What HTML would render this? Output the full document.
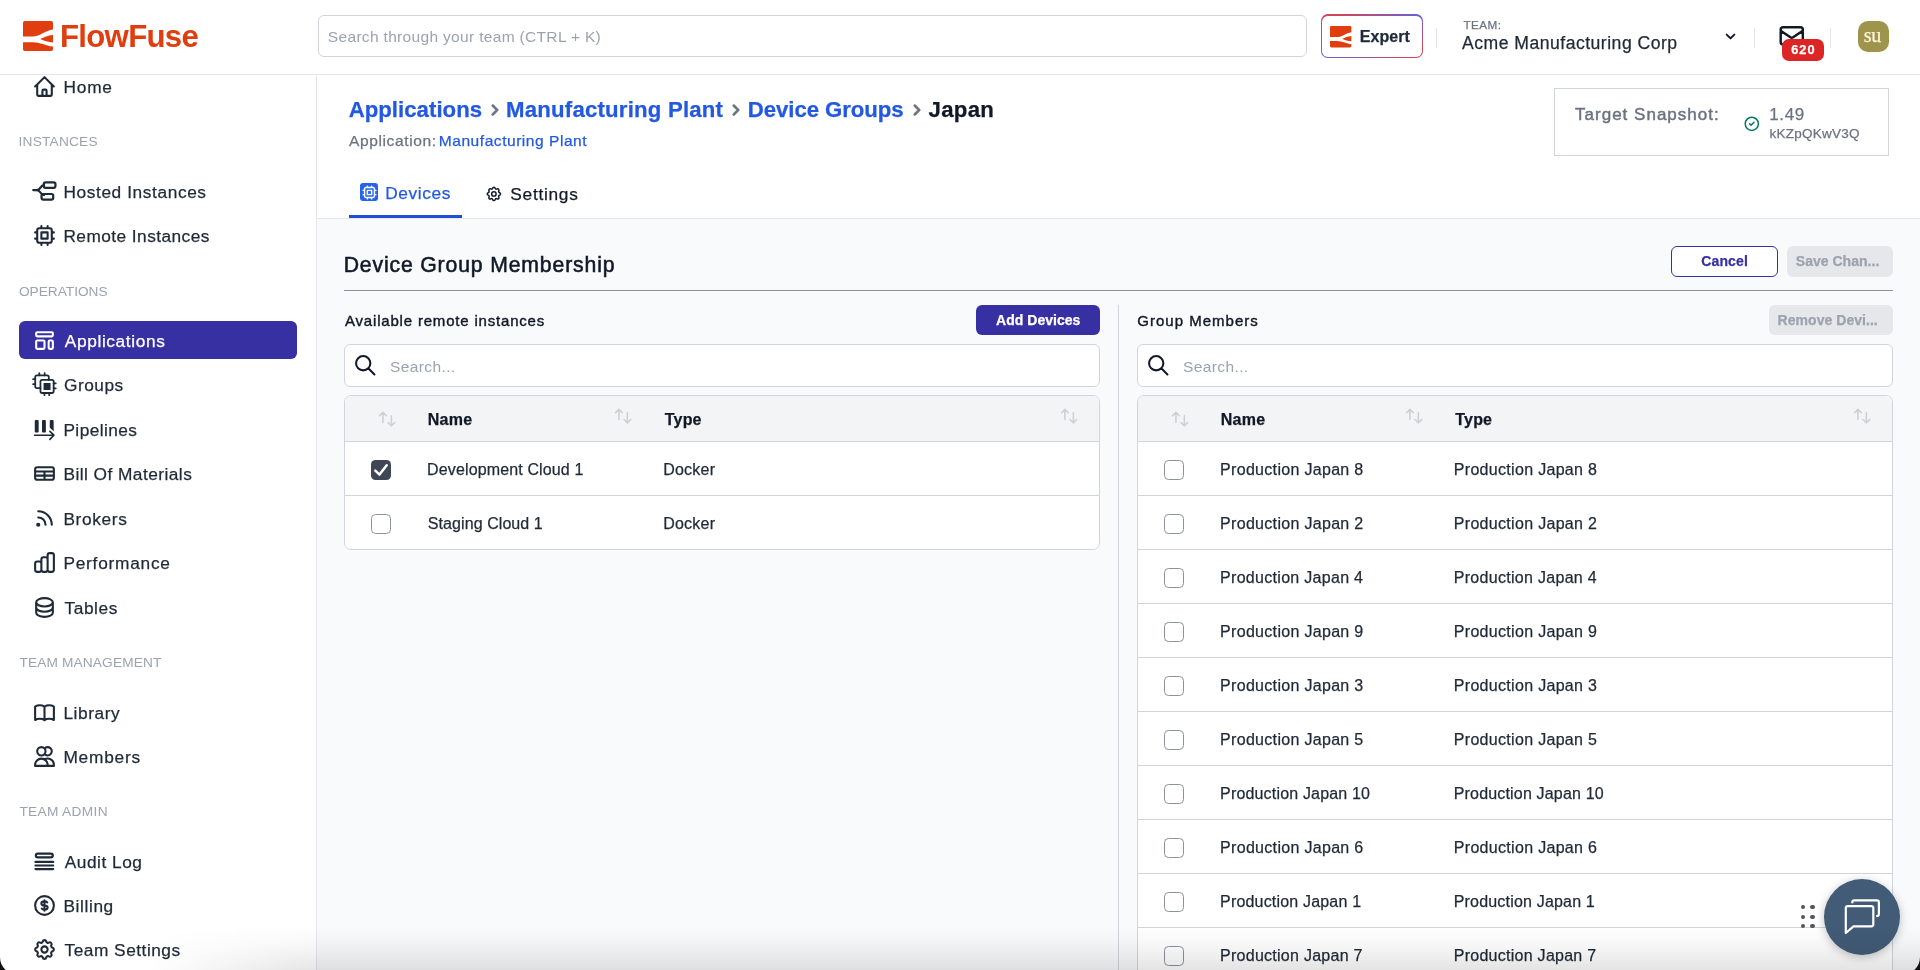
<!DOCTYPE html>
<html lang="en">
<head>
<meta charset="utf-8">
<title>FlowFuse - Device Group Membership</title>
<style>
html,body{margin:0;padding:0}
body{width:1920px;height:970px;overflow:hidden;position:relative;background:#f9fafb;font-family:"Liberation Sans", sans-serif;-webkit-font-smoothing:antialiased}
#app{position:absolute;left:0;top:0;width:1920px;height:970px;overflow:hidden;will-change:transform;transform:translateZ(0)}
.t{position:absolute;white-space:nowrap;line-height:1;display:block}
.i{position:absolute;overflow:visible}
.box{position:absolute;box-sizing:border-box}
.hdr{position:absolute;left:0;top:0;width:1920px;height:74px;background:#fff;border-bottom:1px solid #e5e7eb}
.side{position:absolute;left:0;top:75px;width:316px;height:895px;background:#fff;border-right:1px solid #e5e7eb}
</style>
</head>
<body>
<div id="app">
<div class="hdr"></div>
<svg class="i" style="left:23px;top:21.200px" width="30" height="30" viewBox="0 0 30 30" fill="#e03e0e"><path d="M1.800 0h26.400a1.800 1.800 0 011.800 1.800V8.600C22.500 9.600 17 15.500 10 15.500H0V1.800A1.800 1.800 0 011.800 0z"/><path d="M0 21.200h10c7 0 12.500 3.500 20 4.400v2.600a1.800 1.800 0 01-1.800 1.800H1.800A1.800 1.800 0 010 28.200z"/><path d="M17.200 18C21 16 25 14.300 30 13.900v7.500C25 21.200 21 19.800 17.200 18z"/></svg>
<span class="t" id="t1" style="left:59.95px;letter-spacing:-0.707px;top:20.80px;font-size:31.2px;font-weight:700;color:#e03e0e;">FlowFuse</span>
<div class="box" style="left:318px;top:15px;width:989px;height:42px;border:1px solid #d1d5db;border-radius:6px;background:#fff"></div>
<span class="t" id="t2" style="left:327.81px;letter-spacing:0.307px;top:29.12px;font-size:15.55px;font-weight:400;color:#9ca3af;">Search through your team (CTRL + K)</span>
<div class="box" style="left:1320.800px;top:14.300px;width:102.200px;height:43.400px;border-radius:7px;background:linear-gradient(to bottom right,#cf4657 0%,#cf4657 12%,#6562dc 50%,#cf4657 88%,#cf4657 100%)"></div>
<div class="box" style="left:1322px;top:15.500px;width:99.800px;height:41px;border-radius:5.800px;background:#fff"></div>
<svg class="i" style="left:1329.600px;top:25.800px" width="21.400" height="21.400" viewBox="0 0 30 30" fill="#e03e0e"><path d="M1.800 0h26.400a1.800 1.800 0 011.800 1.800V8.600C22.500 9.600 17 15.500 10 15.500H0V1.800A1.800 1.800 0 011.800 0z"/><path d="M0 21.200h10c7 0 12.500 3.500 20 4.400v2.600a1.800 1.800 0 01-1.800 1.800H1.800A1.800 1.800 0 010 28.200z"/><path d="M17.200 18C21 16 25 14.300 30 13.900v7.500C25 21.200 21 19.800 17.200 18z"/></svg>
<span class="t" id="t3" style="left:1359.70px;letter-spacing:0.076px;top:28.80px;font-size:16px;font-weight:700;color:#1f2937;-webkit-text-stroke:.25px;">Expert</span>
<div class="box" style="left:1436px;top:28px;width:1px;height:20px;background:#e5e7eb"></div>
<span class="t" id="t4" style="left:1463.45px;letter-spacing:0.462px;top:19.35px;font-size:11.7px;font-weight:400;color:#6b7280;-webkit-text-stroke:.25px;">TEAM:</span>
<span class="t" id="t5" style="left:1462.00px;letter-spacing:0.489px;top:34.80px;font-size:17.6px;font-weight:400;color:#1f2937;-webkit-text-stroke:.25px;">Acme Manufacturing Corp</span>
<svg class="i" style="left:1720.50px;top:26.50px" width="19" height="19" viewBox="0 0 20 20" fill="none" stroke="#1f2937" stroke-width="2" stroke-linecap="round" stroke-linejoin="round" ><path d="M5.293 7.293a1 1 0 011.414 0L10 10.586l3.293-3.293a1 1 0 111.414 1.414l-4 4a1 1 0 01-1.414 0l-4-4a1 1 0 010-1.414z" fill="#111827" stroke="none"/></svg>
<div class="box" style="left:1754px;top:28px;width:1px;height:20px;background:#e5e7eb"></div>
<svg class="i" style="left:1776.70px;top:21.20px" width="29.5" height="29.5" viewBox="0 0 24 24" fill="none" stroke="#111827" stroke-width="2" stroke-linecap="round" stroke-linejoin="round" ><path d="M3 8l7.89 5.26a2 2 0 002.22 0L21 8M5 19h14a2 2 0 002-2V7a2 2 0 00-2-2H5a2 2 0 00-2 2v10a2 2 0 002 2z"/></svg>
<div class="box" style="left:1782px;top:39px;width:42px;height:21.500px;border-radius:7px;background:#dc2626"></div>
<span class="t" id="t6" style="left:1791.25px;letter-spacing:0.956px;top:44.40px;font-size:12.8px;font-weight:700;color:#fff;-webkit-text-stroke:.25px;">620</span>
<div class="box" style="left:1830px;top:28px;width:1px;height:20px;background:#e5e7eb"></div>
<div class="box" style="left:1857.500px;top:20.500px;width:31px;height:31px;border-radius:10px;background:#9f944c"></div>
<span class="t" id="t7" style="left:1863.78px;letter-spacing:-0.246px;top:25.30px;font-size:20px;font-weight:400;color:#fdf6d8;-webkit-text-stroke:.25px;font-family:'Liberation Serif', serif;">su</span>
<div class="side"></div>
<svg class="i" style="left:31.95px;top:73.90px" width="25" height="25" viewBox="0 0 24 24" fill="none" stroke="#1f2937" stroke-width="2" stroke-linecap="round" stroke-linejoin="round" ><path d="M3 12l2-2m0 0l7-7 7 7M5 10v10a1 1 0 001 1h3m10-11l2 2m-2-2v10a1 1 0 01-1 1h-3m-6 0a1 1 0 001-1v-4a1 1 0 011-1h2a1 1 0 011 1v4a1 1 0 001 1m-6 0h6"/></svg><span class="t" id="t8" style="left:63.45px;letter-spacing:0.802px;top:78.95px;font-size:17.3px;font-weight:400;color:#1f2937;-webkit-text-stroke:.25px;">Home</span>
<span class="t" id="t9" style="left:18.53px;letter-spacing:0.219px;top:135.25px;font-size:13.7px;font-weight:400;color:#9ca3af;">INSTANCES</span>
<svg class="i" style="left:31.10px;top:177.72px" width="26.67" height="26.67" viewBox="0 0 24 24" fill="none" stroke="#1f2937" stroke-width="2" stroke-linecap="round" stroke-linejoin="round" ><g transform="translate(0 .4)"><path d="M2 10.5h3.2c1.6 0 2.4-.7 3.3-2.2C9.400 6.800 10.200 6 11.800 6"/><path d="M5.200 10.500c1.600 0 2.400.700 3.300 2.200.900 1.500 1.700 2.300 3.300 2.300"/><rect x="11.500" y="3.500" width="10.500" height="5" rx="1.600"/><rect x="9.500" y="14" width="10.500" height="5" rx="1.600"/></g></svg><span class="t" id="t10" style="left:63.45px;letter-spacing:0.602px;top:183.60px;font-size:17.3px;font-weight:400;color:#1f2937;-webkit-text-stroke:.25px;">Hosted Instances</span>
<svg class="i" style="left:31.95px;top:223.00px" width="25" height="25" viewBox="0 0 24 24" fill="none" stroke="#1f2937" stroke-width="2" stroke-linecap="round" stroke-linejoin="round" ><path d="M9 3v2m6-2v2M9 19v2m6-2v2M5 9H3m2 6H3m18-6h-2m2 6h-2M7 19h10a2 2 0 002-2V7a2 2 0 00-2-2H7a2 2 0 00-2 2v10a2 2 0 002 2zM9 9h6v6H9V9z"/></svg><span class="t" id="t11" style="left:63.45px;letter-spacing:0.444px;top:228.05px;font-size:17.3px;font-weight:400;color:#1f2937;-webkit-text-stroke:.25px;">Remote Instances</span>
<span class="t" id="t12" style="left:18.96px;letter-spacing:-0.010px;top:284.75px;font-size:13.7px;font-weight:400;color:#9ca3af;">OPERATIONS</span>
<div class="box" style="left:19px;top:321.2px;width:278px;height:38px;border-radius:6px;background:#3730a3"></div><svg class="i" style="left:31.95px;top:327.90px" width="25" height="25" viewBox="0 0 24 24" fill="none" stroke="#fff" stroke-width="2" stroke-linecap="round" stroke-linejoin="round" ><path d="M4 5a1 1 0 011-1h14a1 1 0 011 1v2a1 1 0 01-1 1H5a1 1 0 01-1-1V5zM4 13a1 1 0 011-1h6a1 1 0 011 1v6a1 1 0 01-1 1H5a1 1 0 01-1-1v-6zM16 13a1 1 0 011-1h2a1 1 0 011 1v6a1 1 0 01-1 1h-2a1 1 0 01-1-1v-6z"/></svg><span class="t" id="t13" style="left:64.80px;letter-spacing:0.623px;top:332.95px;font-size:17.3px;font-weight:400;color:#fff;-webkit-text-stroke:.25px;">Applications</span>
<svg class="i" style="left:31.10px;top:371.47px" width="26.67" height="26.67" viewBox="0 0 24 24" fill="none" stroke="#1f2937" stroke-width="2" stroke-linecap="round" stroke-linejoin="round" ><g stroke-width="1.600"><path d="M16 8V5.400a1.500 1.500 0 00-1.500-1.500H5.300A1.500 1.500 0 003.800 5.400v8.600a1.500 1.500 0 001.500 1.500H8.500"/><path d="M7.500 1.900v2M12.300 1.900v2M1.900 7.400h1.900M1.900 11.900h1.900"/><rect x="8.500" y="8" width="11.900" height="11.800" rx="1.500"/><path d="M20.400 11.100h1.900M20.400 15.600h1.900M12.100 19.800v2M16.400 19.800v2"/><rect x="11.300" y="10.800" width="6.300" height="6.300" fill="#1f2937" stroke="none"/></g></svg><span class="t" id="t14" style="left:63.99px;letter-spacing:0.504px;top:377.35px;font-size:17.3px;font-weight:400;color:#1f2937;-webkit-text-stroke:.25px;">Groups</span>
<svg class="i" style="left:31.10px;top:415.97px" width="26.67" height="26.67" viewBox="0 0 24 24" fill="none" stroke="#1f2937" stroke-width="2" stroke-linecap="round" stroke-linejoin="round" ><rect x="3.400" y="3.600" width="3.500" height="11.200" rx=".8" fill="#1f2937" stroke="none"/><rect x="9.900" y="3.600" width="3.500" height="11.200" rx=".8" fill="#1f2937" stroke="none"/><path d="M16.900 4.400a.8.8 0 01.8-.8h1.900a.8.8 0 01.8.8V13.800L16.900 10.500z" fill="#1f2937" stroke="none"/><path d="M3.300 17.300H20.500M17 13.800l3.600 3.500-3.600 3.800" stroke-width="1.500"/></svg><span class="t" id="t15" style="left:63.45px;letter-spacing:0.411px;top:421.85px;font-size:17.3px;font-weight:400;color:#1f2937;-webkit-text-stroke:.25px;">Pipelines</span>
<svg class="i" style="left:31.95px;top:461.20px" width="25" height="25" viewBox="0 0 24 24" fill="none" stroke="#1f2937" stroke-width="2" stroke-linecap="round" stroke-linejoin="round" ><path d="M3 10h18M3 14h18m-9-4v8m-7 0h14a2 2 0 002-2V8a2 2 0 00-2-2H5a2 2 0 00-2 2v8a2 2 0 002 2z"/></svg><span class="t" id="t16" style="left:63.45px;letter-spacing:0.460px;top:466.25px;font-size:17.3px;font-weight:400;color:#1f2937;-webkit-text-stroke:.25px;">Bill Of Materials</span>
<svg class="i" style="left:31.95px;top:505.70px" width="25" height="25" viewBox="0 0 24 24" fill="none" stroke="#1f2937" stroke-width="2" stroke-linecap="round" stroke-linejoin="round" ><path d="M6 5c7.18 0 13 5.82 13 13M6 11a7 7 0 017 7m-6 0a1 1 0 11-2 0 1 1 0 012 0z"/></svg><span class="t" id="t17" style="left:63.45px;letter-spacing:0.648px;top:510.75px;font-size:17.3px;font-weight:400;color:#1f2937;-webkit-text-stroke:.25px;">Brokers</span>
<svg class="i" style="left:31.95px;top:550.10px" width="25" height="25" viewBox="0 0 24 24" fill="none" stroke="#1f2937" stroke-width="2" stroke-linecap="round" stroke-linejoin="round" ><path d="M9 19v-6a2 2 0 00-2-2H5a2 2 0 00-2 2v6a2 2 0 002 2h2a2 2 0 002-2zm0 0V9a2 2 0 012-2h2a2 2 0 012 2v10m-6 0a2 2 0 002 2h2a2 2 0 002-2m0 0V5a2 2 0 012-2h2a2 2 0 012 2v14a2 2 0 01-2 2h-2a2 2 0 01-2-2z"/></svg><span class="t" id="t18" style="left:63.45px;letter-spacing:0.762px;top:555.15px;font-size:17.3px;font-weight:400;color:#1f2937;-webkit-text-stroke:.25px;">Performance</span>
<svg class="i" style="left:31.95px;top:594.60px" width="25" height="25" viewBox="0 0 24 24" fill="none" stroke="#1f2937" stroke-width="2" stroke-linecap="round" stroke-linejoin="round" ><path d="M4 7v10c0 2.21 3.582 4 8 4s8-1.79 8-4V7M4 7c0 2.21 3.582 4 8 4s8-1.79 8-4M4 7c0-2.21 3.582-4 8-4s8 1.79 8 4m0 5c0 2.21-3.582 4-8 4s-8-1.79-8-4"/></svg><span class="t" id="t19" style="left:64.53px;letter-spacing:0.581px;top:599.65px;font-size:17.3px;font-weight:400;color:#1f2937;-webkit-text-stroke:.25px;">Tables</span>
<span class="t" id="t20" style="left:19.39px;letter-spacing:0.150px;top:655.95px;font-size:13.7px;font-weight:400;color:#9ca3af;">TEAM MANAGEMENT</span>
<svg class="i" style="left:31.95px;top:699.50px" width="25" height="25" viewBox="0 0 24 24" fill="none" stroke="#1f2937" stroke-width="2" stroke-linecap="round" stroke-linejoin="round" ><path d="M12 6.253v13m0-13C10.832 5.477 9.246 5 7.5 5S4.168 5.477 3 6.253v13C4.168 18.477 5.754 18 7.5 18s3.332.477 4.5 1.253m0-13C13.168 5.477 14.754 5 16.5 5c1.747 0 3.332.477 4.5 1.253v13C19.832 18.477 18.247 18 16.5 18c-1.746 0-3.332.477-4.5 1.253"/></svg><span class="t" id="t21" style="left:63.45px;letter-spacing:0.562px;top:704.55px;font-size:17.3px;font-weight:400;color:#1f2937;-webkit-text-stroke:.25px;">Library</span>
<svg class="i" style="left:31.95px;top:743.90px" width="25" height="25" viewBox="0 0 24 24" fill="none" stroke="#1f2937" stroke-width="2" stroke-linecap="round" stroke-linejoin="round" ><path d="M12 4.354a4 4 0 110 5.292M15 21H3v-1a6 6 0 0112 0v1zm0 0h6v-1a6 6 0 00-9-5.197M13 7a4 4 0 11-8 0 4 4 0 018 0z"/></svg><span class="t" id="t22" style="left:63.45px;letter-spacing:0.766px;top:748.95px;font-size:17.3px;font-weight:400;color:#1f2937;-webkit-text-stroke:.25px;">Members</span>
<span class="t" id="t23" style="left:19.39px;letter-spacing:0.336px;top:805.35px;font-size:13.7px;font-weight:400;color:#9ca3af;">TEAM ADMIN</span>
<svg class="i" style="left:31.10px;top:847.66px" width="26.67" height="26.67" viewBox="0 0 24 24" fill="none" stroke="#1f2937" stroke-width="2" stroke-linecap="round" stroke-linejoin="round" ><rect x="4.400" y="5.100" width="15.200" height="3.300" rx="1.650"/><path d="M4 12.500h16M4 15.800h16M4 19h16" stroke-width="1.900"/></svg><span class="t" id="t24" style="left:64.80px;letter-spacing:0.509px;top:853.55px;font-size:17.3px;font-weight:400;color:#1f2937;-webkit-text-stroke:.25px;">Audit Log</span>
<svg class="i" style="left:31.95px;top:892.80px" width="25" height="25" viewBox="0 0 24 24" fill="none" stroke="#1f2937" stroke-width="2" stroke-linecap="round" stroke-linejoin="round" ><path d="M12 8c-1.657 0-3 .895-3 2s1.343 2 3 2 3 .895 3 2-1.343 2-3 2m0-8c1.11 0 2.08.402 2.599 1M12 8V7m0 1v8m0 0v1m0-1c-1.11 0-2.08-.402-2.599-1M21 12a9 9 0 11-18 0 9 9 0 0118 0z"/></svg><span class="t" id="t25" style="left:63.45px;letter-spacing:0.611px;top:897.85px;font-size:17.3px;font-weight:400;color:#1f2937;-webkit-text-stroke:.25px;">Billing</span>
<svg class="i" style="left:31.95px;top:937.00px" width="25" height="25" viewBox="0 0 24 24" fill="none" stroke="#1f2937" stroke-width="2" stroke-linecap="round" stroke-linejoin="round" ><path d="M10.325 4.317c.426-1.756 2.924-1.756 3.35 0a1.724 1.724 0 002.573 1.066c1.543-.94 3.31.826 2.37 2.37a1.724 1.724 0 001.065 2.572c1.756.426 1.756 2.924 0 3.35a1.724 1.724 0 00-1.066 2.573c.94 1.543-.826 3.31-2.37 2.37a1.724 1.724 0 00-2.572 1.065c-.426 1.756-2.924 1.756-3.35 0a1.724 1.724 0 00-2.573-1.066c-1.543.94-3.31-.826-2.37-2.37a1.724 1.724 0 00-1.065-2.572c-1.756-.426-1.756-2.924 0-3.35a1.724 1.724 0 001.066-2.573c-.94-1.543.826-3.31 2.37-2.37.996.608 2.296.07 2.572-1.065z"/><path d="M15 12a3 3 0 11-6 0 3 3 0 016 0z"/></svg><span class="t" id="t26" style="left:64.53px;letter-spacing:0.508px;top:942.05px;font-size:17.3px;font-weight:400;color:#1f2937;-webkit-text-stroke:.25px;">Team Settings</span>
<div class="box" style="left:317px;top:75px;width:1603px;height:144px;background:#fff;border-bottom:1px solid #e5e7eb"></div>
<span class="t" id="t27" style="left:348.65px;letter-spacing:0.031px;top:99.40px;font-size:22.2px;font-weight:700;color:#2259e0;-webkit-text-stroke:.25px;">Applications</span>
<svg class="i" style="left:484.00px;top:99.00px" width="22" height="22" viewBox="0 0 20 20" fill="none" stroke="#1f2937" stroke-width="2" stroke-linecap="round" stroke-linejoin="round" ><path d="M7.293 14.707a1 1 0 010-1.414L10.586 10 7.293 6.707a1 1 0 011.414-1.414l4 4a1 1 0 010 1.414l-4 4a1 1 0 01-1.414 0z" fill="#6b7280" stroke="#6b7280" stroke-width=".5"/></svg>
<span class="t" id="t28" style="left:506.11px;letter-spacing:0.201px;top:99.40px;font-size:22.2px;font-weight:700;color:#2259e0;-webkit-text-stroke:.25px;">Manufacturing Plant</span>
<svg class="i" style="left:725.00px;top:99.00px" width="22" height="22" viewBox="0 0 20 20" fill="none" stroke="#1f2937" stroke-width="2" stroke-linecap="round" stroke-linejoin="round" ><path d="M7.293 14.707a1 1 0 010-1.414L10.586 10 7.293 6.707a1 1 0 011.414-1.414l4 4a1 1 0 010 1.414l-4 4a1 1 0 01-1.414 0z" fill="#6b7280" stroke="#6b7280" stroke-width=".5"/></svg>
<span class="t" id="t29" style="left:747.81px;letter-spacing:-0.067px;top:99.40px;font-size:22.2px;font-weight:700;color:#2259e0;-webkit-text-stroke:.25px;">Device Groups</span>
<svg class="i" style="left:905.50px;top:99.00px" width="22" height="22" viewBox="0 0 20 20" fill="none" stroke="#1f2937" stroke-width="2" stroke-linecap="round" stroke-linejoin="round" ><path d="M7.293 14.707a1 1 0 010-1.414L10.586 10 7.293 6.707a1 1 0 011.414-1.414l4 4a1 1 0 010 1.414l-4 4a1 1 0 01-1.414 0z" fill="#6b7280" stroke="#6b7280" stroke-width=".5"/></svg>
<span class="t" id="t30" style="left:928.60px;letter-spacing:0.278px;top:99.40px;font-size:22.2px;font-weight:700;color:#111827;-webkit-text-stroke:.25px;">Japan</span>
<span class="t" id="t31" style="left:349.00px;letter-spacing:0.610px;top:132.92px;font-size:15.55px;font-weight:400;color:#6b7280;-webkit-text-stroke:.25px;">Application:</span>
<span class="t" id="t32" style="left:438.79px;letter-spacing:0.531px;top:132.92px;font-size:15.55px;font-weight:400;color:#2259e0;-webkit-text-stroke:.25px;">Manufacturing Plant</span>
<div class="box" style="left:1554px;top:88px;width:335px;height:68px;border:1px solid #d1d5db;background:#fff"></div>
<span class="t" id="t33" style="left:1575.03px;letter-spacing:1.011px;top:106.30px;font-size:17px;font-weight:500;color:#6b7280;-webkit-text-stroke:.45px #6b7280;">Target Snapshot:</span>
<svg class="i" style="left:1742.80px;top:115.20px" width="17.6" height="17.6" viewBox="0 0 24 24" fill="none" stroke="#047857" stroke-width="2" stroke-linecap="round" stroke-linejoin="round" ><path d="M9 12l2 2 4-4m6 2a9 9 0 11-18 0 9 9 0 0118 0z"/></svg>
<span class="t" id="t34" style="left:1769.24px;letter-spacing:0.622px;top:106.30px;font-size:17px;font-weight:400;color:#6b7280;-webkit-text-stroke:.25px;">1.49</span>
<span class="t" id="t35" style="left:1769.46px;letter-spacing:0.239px;top:126.55px;font-size:13.5px;font-weight:400;color:#6b7280;-webkit-text-stroke:.25px;">kKZpQKwV3Q</span>
<div class="box" style="left:360.200px;top:183.400px;width:17.800px;height:17.500px;border-radius:3px;background:#2563eb"></div>
<svg class="i" style="left:360.60px;top:183.60px" width="17" height="17" viewBox="0 0 24 24" fill="none" stroke="#fff" stroke-width="2.1" stroke-linecap="round" stroke-linejoin="round" ><path d="M9 3v2m6-2v2M9 19v2m6-2v2M5 9H3m2 6H3m18-6h-2m2 6h-2M7 19h10a2 2 0 002-2V7a2 2 0 00-2-2H7a2 2 0 00-2 2v10a2 2 0 002 2zM9 9h6v6H9V9z"/></svg>
<span class="t" id="t36" style="left:385.25px;letter-spacing:0.594px;top:184.55px;font-size:17.3px;font-weight:400;color:#2259e0;-webkit-text-stroke:.25px;">Devices</span>
<div class="box" style="left:348.500px;top:214.700px;width:113px;height:3.600px;background:#1d4ed8"></div>
<svg class="i" style="left:484.50px;top:185.30px" width="17.8" height="17.8" viewBox="0 0 24 24" fill="none" stroke="#111827" stroke-width="2" stroke-linecap="round" stroke-linejoin="round" ><path d="M10.325 4.317c.426-1.756 2.924-1.756 3.35 0a1.724 1.724 0 002.573 1.066c1.543-.94 3.31.826 2.37 2.37a1.724 1.724 0 001.065 2.572c1.756.426 1.756 2.924 0 3.35a1.724 1.724 0 00-1.066 2.573c.94 1.543-.826 3.31-2.37 2.37a1.724 1.724 0 00-2.572 1.065c-.426 1.756-2.924 1.756-3.35 0a1.724 1.724 0 00-2.573-1.066c-1.543.94-3.31-.826-2.37-2.37a1.724 1.724 0 00-1.065-2.572c-1.756-.426-1.756-2.924 0-3.35a1.724 1.724 0 001.066-2.573c-.94-1.543.826-3.31 2.37-2.37.996.608 2.296.07 2.572-1.065z"/><path d="M15 12a3 3 0 11-6 0 3 3 0 016 0z"/></svg>
<span class="t" id="t37" style="left:510.36px;letter-spacing:0.710px;top:186.35px;font-size:17.3px;font-weight:400;color:#111827;-webkit-text-stroke:.25px;">Settings</span>
<span class="t" id="t38" style="left:343.64px;letter-spacing:0.858px;top:253.80px;font-size:21.2px;font-weight:400;color:#111827;-webkit-text-stroke:.55px #111827;">Device Group Membership</span>
<div class="box" style="left:344px;top:290px;width:1549px;height:1px;background:#8b919c"></div>
<div class="box" style="left:1671px;top:246px;width:107px;height:30.500px;border:1.500px solid #3730a3;border-radius:6px;background:#fff"></div>
<span class="t" id="t39" style="left:1701.16px;letter-spacing:0.171px;top:254.20px;font-size:14px;font-weight:700;color:#3730a3;-webkit-text-stroke:.25px;">Cancel</span>
<div class="box" style="left:1787px;top:246px;width:106.300px;height:30.500px;border-radius:6px;background:#e5e7eb"></div>
<span class="t" id="t40" style="left:1795.78px;letter-spacing:0.026px;top:254.20px;font-size:14px;font-weight:700;color:#9ca3af;-webkit-text-stroke:.25px;">Save Chan...</span>
<span class="t" id="t41" style="left:345.00px;letter-spacing:0.811px;top:313.30px;font-size:15px;font-weight:400;color:#111827;-webkit-text-stroke:.4px #111827;">Available remote instances</span><div class="box" style="left:976px;top:304.500px;width:124px;height:30.500px;border-radius:6px;background:#3730a3"></div><span class="t" id="t42" style="left:996.08px;letter-spacing:0.025px;top:313.30px;font-size:14px;font-weight:700;color:#fff;-webkit-text-stroke:.25px;">Add Devices</span><div class="box" style="left:344px;top:344px;width:756px;height:43px;border:1px solid #d1d5db;border-radius:6px;background:#fff"></div><svg class="i" style="left:352.50px;top:352.70px" width="24.5" height="24.5" viewBox="0 0 24 24" fill="none" stroke="#111827" stroke-width="2" stroke-linecap="round" stroke-linejoin="round" ><path d="M21 21l-6-6m2-5a7 7 0 11-14 0 7 7 0 0114 0z"/></svg><span class="t" id="t43" style="left:390.01px;letter-spacing:0.370px;top:359.12px;font-size:15.55px;font-weight:400;color:#9ca3af;">Search...</span><div class="box" style="left:344px;top:395px;width:756px;height:155px;border:1px solid #d1d5db;border-radius:7px;background:#fff;overflow:hidden"><div style="height:45px;background:#f3f4f6;border-bottom:1px solid #d1d5db"></div><div style="position:absolute;left:0;right:0;top:99px;height:1px;background:#d1d5db"></div></div><svg class="i" style="left:377.10px;top:408.85px" width="20.3" height="20.3" viewBox="0 0 24 24" fill="none" stroke="#cdd1d7" stroke-width="1.9" stroke-linecap="round" stroke-linejoin="round" ><path d="M7 16V4m0 0L3 8m4-4l4 4m6 0v12m0 0l4-4m-4 4l-4-4"/></svg><svg class="i" style="left:613.10px;top:406.00px" width="20.3" height="20.3" viewBox="0 0 24 24" fill="none" stroke="#cdd1d7" stroke-width="1.9" stroke-linecap="round" stroke-linejoin="round" ><path d="M7 16V4m0 0L3 8m4-4l4 4m6 0v12m0 0l4-4m-4 4l-4-4"/></svg><svg class="i" style="left:1058.60px;top:406.00px" width="20.3" height="20.3" viewBox="0 0 24 24" fill="none" stroke="#cdd1d7" stroke-width="1.9" stroke-linecap="round" stroke-linejoin="round" ><path d="M7 16V4m0 0L3 8m4-4l4 4m6 0v12m0 0l4-4m-4 4l-4-4"/></svg><span class="t" id="t44" style="left:427.80px;letter-spacing:0.273px;top:411.50px;font-size:16px;font-weight:700;color:#111827;-webkit-text-stroke:.25px;">Name</span><span class="t" id="t45" style="left:664.80px;letter-spacing:0.181px;top:411.50px;font-size:16px;font-weight:700;color:#111827;-webkit-text-stroke:.25px;">Type</span><div class="box" style="left:371px;top:459.8px;width:20px;height:20px;border-radius:4.500px;background:#3f4756"></div><svg class="i" style="left:371.00px;top:459.80px" width="20" height="20" viewBox="0 0 20 20" fill="none" stroke="#fff" stroke-width="2.5" stroke-linecap="round" stroke-linejoin="round" ><path d="M4.300 10.700l4.200 3.900L15.700 5.200"/></svg><span class="t" id="t46" style="left:427.05px;letter-spacing:0.135px;top:461.80px;font-size:16px;font-weight:400;color:#1f2937;-webkit-text-stroke:.25px;">Development Cloud 1</span><span class="t" id="t47" style="left:663.25px;letter-spacing:0.210px;top:461.80px;font-size:16px;font-weight:400;color:#1f2937;-webkit-text-stroke:.25px;">Docker</span><div class="box" style="left:371px;top:513.8px;width:20px;height:20px;border-radius:4.500px;background:#fff;border:1px solid #8d929b"></div><span class="t" id="t48" style="left:427.80px;letter-spacing:0.078px;top:515.80px;font-size:16px;font-weight:400;color:#1f2937;-webkit-text-stroke:.25px;">Staging Cloud 1</span><span class="t" id="t49" style="left:663.25px;letter-spacing:0.210px;top:515.80px;font-size:16px;font-weight:400;color:#1f2937;-webkit-text-stroke:.25px;">Docker</span>
<div class="box" style="left:1118px;top:304.500px;width:1px;height:680px;background:#d1d5db"></div>
<span class="t" id="t50" style="left:1137.30px;letter-spacing:1.009px;top:313.30px;font-size:15px;font-weight:400;color:#111827;-webkit-text-stroke:.4px #111827;">Group Members</span><div class="box" style="left:1769px;top:304.500px;width:124px;height:30.500px;border-radius:6px;background:#e5e7eb"></div><span class="t" id="t51" style="left:1777.62px;letter-spacing:0.039px;top:313.10px;font-size:14px;font-weight:700;color:#9ca3af;-webkit-text-stroke:.25px;">Remove Devi...</span><div class="box" style="left:1137px;top:344px;width:756px;height:43px;border:1px solid #d1d5db;border-radius:6px;background:#fff"></div><svg class="i" style="left:1145.50px;top:352.70px" width="24.5" height="24.5" viewBox="0 0 24 24" fill="none" stroke="#111827" stroke-width="2" stroke-linecap="round" stroke-linejoin="round" ><path d="M21 21l-6-6m2-5a7 7 0 11-14 0 7 7 0 0114 0z"/></svg><span class="t" id="t52" style="left:1183.01px;letter-spacing:0.370px;top:359.12px;font-size:15.55px;font-weight:400;color:#9ca3af;">Search...</span><div class="box" style="left:1137px;top:395px;width:756px;height:587px;border:1px solid #d1d5db;border-radius:7px;background:#fff;overflow:hidden"><div style="height:45px;background:#f3f4f6;border-bottom:1px solid #d1d5db"></div><div style="position:absolute;left:0;right:0;top:99px;height:1px;background:#d1d5db"></div><div style="position:absolute;left:0;right:0;top:153px;height:1px;background:#d1d5db"></div><div style="position:absolute;left:0;right:0;top:207px;height:1px;background:#d1d5db"></div><div style="position:absolute;left:0;right:0;top:261px;height:1px;background:#d1d5db"></div><div style="position:absolute;left:0;right:0;top:315px;height:1px;background:#d1d5db"></div><div style="position:absolute;left:0;right:0;top:369px;height:1px;background:#d1d5db"></div><div style="position:absolute;left:0;right:0;top:423px;height:1px;background:#d1d5db"></div><div style="position:absolute;left:0;right:0;top:477px;height:1px;background:#d1d5db"></div><div style="position:absolute;left:0;right:0;top:531px;height:1px;background:#d1d5db"></div></div><svg class="i" style="left:1170.10px;top:408.85px" width="20.3" height="20.3" viewBox="0 0 24 24" fill="none" stroke="#cdd1d7" stroke-width="1.9" stroke-linecap="round" stroke-linejoin="round" ><path d="M7 16V4m0 0L3 8m4-4l4 4m6 0v12m0 0l4-4m-4 4l-4-4"/></svg><svg class="i" style="left:1404.10px;top:406.00px" width="20.3" height="20.3" viewBox="0 0 24 24" fill="none" stroke="#cdd1d7" stroke-width="1.9" stroke-linecap="round" stroke-linejoin="round" ><path d="M7 16V4m0 0L3 8m4-4l4 4m6 0v12m0 0l4-4m-4 4l-4-4"/></svg><svg class="i" style="left:1851.60px;top:406.00px" width="20.3" height="20.3" viewBox="0 0 24 24" fill="none" stroke="#cdd1d7" stroke-width="1.9" stroke-linecap="round" stroke-linejoin="round" ><path d="M7 16V4m0 0L3 8m4-4l4 4m6 0v12m0 0l4-4m-4 4l-4-4"/></svg><span class="t" id="t53" style="left:1220.80px;letter-spacing:0.273px;top:411.50px;font-size:16px;font-weight:700;color:#111827;-webkit-text-stroke:.25px;">Name</span><span class="t" id="t54" style="left:1455.30px;letter-spacing:0.181px;top:411.50px;font-size:16px;font-weight:700;color:#111827;-webkit-text-stroke:.25px;">Type</span><div class="box" style="left:1164px;top:459.8px;width:20px;height:20px;border-radius:4.500px;background:#fff;border:1px solid #8d929b"></div><span class="t" id="t55" style="left:1220.05px;letter-spacing:0.313px;top:461.80px;font-size:16px;font-weight:400;color:#1f2937;-webkit-text-stroke:.25px;">Production Japan 8</span><span class="t" id="t56" style="left:1453.75px;letter-spacing:0.313px;top:461.80px;font-size:16px;font-weight:400;color:#1f2937;-webkit-text-stroke:.25px;">Production Japan 8</span><div class="box" style="left:1164px;top:513.8px;width:20px;height:20px;border-radius:4.500px;background:#fff;border:1px solid #8d929b"></div><span class="t" id="t57" style="left:1220.05px;letter-spacing:0.313px;top:515.80px;font-size:16px;font-weight:400;color:#1f2937;-webkit-text-stroke:.25px;">Production Japan 2</span><span class="t" id="t58" style="left:1453.75px;letter-spacing:0.313px;top:515.80px;font-size:16px;font-weight:400;color:#1f2937;-webkit-text-stroke:.25px;">Production Japan 2</span><div class="box" style="left:1164px;top:567.8px;width:20px;height:20px;border-radius:4.500px;background:#fff;border:1px solid #8d929b"></div><span class="t" id="t59" style="left:1220.05px;letter-spacing:0.298px;top:569.80px;font-size:16px;font-weight:400;color:#1f2937;-webkit-text-stroke:.25px;">Production Japan 4</span><span class="t" id="t60" style="left:1453.75px;letter-spacing:0.298px;top:569.80px;font-size:16px;font-weight:400;color:#1f2937;-webkit-text-stroke:.25px;">Production Japan 4</span><div class="box" style="left:1164px;top:621.8px;width:20px;height:20px;border-radius:4.500px;background:#fff;border:1px solid #8d929b"></div><span class="t" id="t61" style="left:1220.05px;letter-spacing:0.313px;top:623.80px;font-size:16px;font-weight:400;color:#1f2937;-webkit-text-stroke:.25px;">Production Japan 9</span><span class="t" id="t62" style="left:1453.75px;letter-spacing:0.313px;top:623.80px;font-size:16px;font-weight:400;color:#1f2937;-webkit-text-stroke:.25px;">Production Japan 9</span><div class="box" style="left:1164px;top:675.8px;width:20px;height:20px;border-radius:4.500px;background:#fff;border:1px solid #8d929b"></div><span class="t" id="t63" style="left:1220.05px;letter-spacing:0.313px;top:677.80px;font-size:16px;font-weight:400;color:#1f2937;-webkit-text-stroke:.25px;">Production Japan 3</span><span class="t" id="t64" style="left:1453.75px;letter-spacing:0.313px;top:677.80px;font-size:16px;font-weight:400;color:#1f2937;-webkit-text-stroke:.25px;">Production Japan 3</span><div class="box" style="left:1164px;top:729.8px;width:20px;height:20px;border-radius:4.500px;background:#fff;border:1px solid #8d929b"></div><span class="t" id="t65" style="left:1220.05px;letter-spacing:0.313px;top:731.80px;font-size:16px;font-weight:400;color:#1f2937;-webkit-text-stroke:.25px;">Production Japan 5</span><span class="t" id="t66" style="left:1453.75px;letter-spacing:0.313px;top:731.80px;font-size:16px;font-weight:400;color:#1f2937;-webkit-text-stroke:.25px;">Production Japan 5</span><div class="box" style="left:1164px;top:783.8px;width:20px;height:20px;border-radius:4.500px;background:#fff;border:1px solid #8d929b"></div><span class="t" id="t67" style="left:1220.05px;letter-spacing:0.176px;top:785.80px;font-size:16px;font-weight:400;color:#1f2937;-webkit-text-stroke:.25px;">Production Japan 10</span><span class="t" id="t68" style="left:1453.75px;letter-spacing:0.176px;top:785.80px;font-size:16px;font-weight:400;color:#1f2937;-webkit-text-stroke:.25px;">Production Japan 10</span><div class="box" style="left:1164px;top:837.8px;width:20px;height:20px;border-radius:4.500px;background:#fff;border:1px solid #8d929b"></div><span class="t" id="t69" style="left:1220.05px;letter-spacing:0.313px;top:839.80px;font-size:16px;font-weight:400;color:#1f2937;-webkit-text-stroke:.25px;">Production Japan 6</span><span class="t" id="t70" style="left:1453.75px;letter-spacing:0.313px;top:839.80px;font-size:16px;font-weight:400;color:#1f2937;-webkit-text-stroke:.25px;">Production Japan 6</span><div class="box" style="left:1164px;top:891.8px;width:20px;height:20px;border-radius:4.500px;background:#fff;border:1px solid #8d929b"></div><span class="t" id="t71" style="left:1220.05px;letter-spacing:0.184px;top:893.80px;font-size:16px;font-weight:400;color:#1f2937;-webkit-text-stroke:.25px;">Production Japan 1</span><span class="t" id="t72" style="left:1453.75px;letter-spacing:0.184px;top:893.80px;font-size:16px;font-weight:400;color:#1f2937;-webkit-text-stroke:.25px;">Production Japan 1</span><div class="box" style="left:1164px;top:945.8px;width:20px;height:20px;border-radius:4.500px;background:#fff;border:1px solid #8d929b"></div><span class="t" id="t73" style="left:1220.05px;letter-spacing:0.266px;top:947.80px;font-size:16px;font-weight:400;color:#1f2937;-webkit-text-stroke:.25px;">Production Japan 7</span><span class="t" id="t74" style="left:1453.75px;letter-spacing:0.266px;top:947.80px;font-size:16px;font-weight:400;color:#1f2937;-webkit-text-stroke:.25px;">Production Japan 7</span>
<div class="box" style="left:1823.500px;top:878.500px;width:76px;height:76px;border-radius:50%;background:#425b76;box-shadow:0 2px 10px rgba(0,0,0,.25)"></div>
<svg class="i" style="left:1842px;top:897px" width="40" height="40" viewBox="0 0 40 40" fill="none" stroke="#fff" stroke-width="2.200" stroke-linejoin="round"><path d="M10.300 6.200V5.300a2 2 0 012-2H34.900a2 2 0 012 2V17a2 2 0 01-2 2H34.200"/><path d="M5.800 9.100H29.300a2 2 0 012 2V27.300a2 2 0 01-2 2H11.500L3.800 36V11.100a2 2 0 012-2z"/></svg>
<div class="box" style="left:1801.0px;top:905.0px;width:4.400px;height:4.400px;border-radius:50%;background:#555"></div>
<div class="box" style="left:1801.0px;top:914.5px;width:4.400px;height:4.400px;border-radius:50%;background:#555"></div>
<div class="box" style="left:1801.0px;top:924.1px;width:4.400px;height:4.400px;border-radius:50%;background:#555"></div>
<div class="box" style="left:1810.2px;top:905.0px;width:4.400px;height:4.400px;border-radius:50%;background:#555"></div>
<div class="box" style="left:1810.2px;top:914.5px;width:4.400px;height:4.400px;border-radius:50%;background:#555"></div>
<div class="box" style="left:1810.2px;top:924.1px;width:4.400px;height:4.400px;border-radius:50%;background:#555"></div>
<div class="box" style="left:150px;top:926px;width:1770px;height:44px;background:linear-gradient(to bottom,rgba(0,0,0,0) 0%,rgba(0,0,0,.025) 35%,rgba(0,0,0,.065) 70%,rgba(0,0,0,.105) 100%);-webkit-mask-image:linear-gradient(to right,transparent 0,#000 170px);mask-image:linear-gradient(to right,transparent 0,#000 170px)"></div>
<svg class="i" style="left:0;top:956px" width="1920" height="14" viewBox="0 0 1920 14"><path d="M0 1V14H5.600A18 18 0 010 1z" fill="#111"/><path d="M1920 1V14H1914.400A18 18 0 001920 1z" fill="#111"/></svg>
</div>
</body>
</html>
